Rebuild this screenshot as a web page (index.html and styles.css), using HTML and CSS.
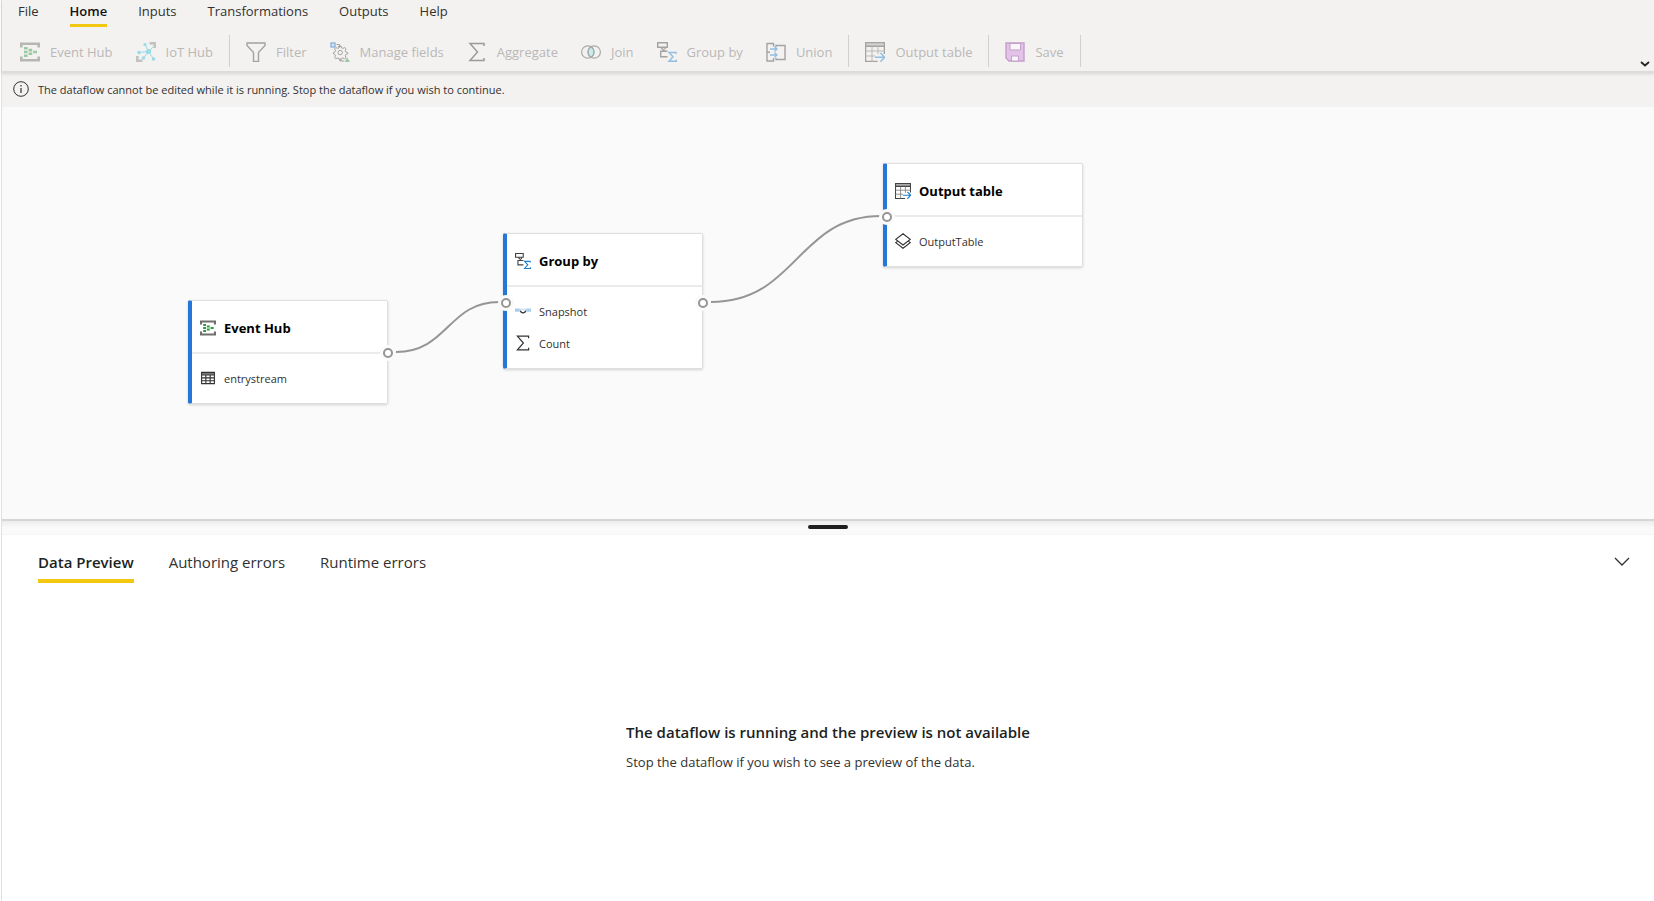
FILE: index.html
```html
<!DOCTYPE html>
<html lang="en">
<head>
<meta charset="UTF-8">
<meta name="viewport" content="width=device-width, initial-scale=1.0">
<title>Dataflow</title>
<link rel="stylesheet" href="styles.css">
</head>
<body>

<!-- shared icons, 20x20 -->
<svg class="sprite" aria-hidden="true">
<symbol id="i-eventhub" viewBox="0 0 20 20">
<path d="M0 0.5h20v5h-2.6v-2.4h-14.8v2.4h-2.6zM0 19.5h20v-5h-2.6v2.4h-14.8v-2.4h-2.6z" fill="#6e6e6e"/>
<path d="M4 5h3.6v2.6h-3.6zM4 8.7h3.6v2.6h-3.6zM4 12.4h3.6v2.6h-3.6zM8.6 6.8h3.6v2.6h-3.6zM8.6 10.5h3.6v2.6h-3.6zM13.2 8.7h3.8v2.6h-3.8z" fill="#2f9a41"/>
</symbol>
<symbol id="i-iothub" viewBox="0 0 20 20">
<path d="M13.5 0h6.5v6h-2.6v-3.4h-3.9zM0 14h2.6v3.4h3.9v2.6h-6.5z" fill="#8a8a8a"/>
<path d="M12.5 9.5L9 2.5M12.5 9.5L3 10.5M12.5 9.5L17.5 17M12.5 9.5L7.5 16M12.5 9.5L17 5" fill="none" stroke="#32bedd"/>
<g fill="#32bedd"><circle cx="12.5" cy="9.5" r="2.6"/><circle cx="9" cy="2.5" r="1.6"/><circle cx="3" cy="10.5" r="1.8"/><circle cx="17.5" cy="17" r="1.8"/><circle cx="7.5" cy="16" r="1.8"/></g>
</symbol>
<symbol id="i-filter" viewBox="0 0 20 20">
<path d="M1 1h18v2.5l-6.5 7v9h-5v-9L1 3.5z" fill="none" stroke="#444" stroke-width="1.4"/>
</symbol>
<symbol id="i-manage" viewBox="0 0 20 20">
<rect x="1" y="1" width="4" height="4" fill="#bcd6f2" stroke="#0f6cbd" stroke-width="1.4"/>
<path d="M6.5 2.5h3v2.5M8 4l1.5 1.5L11 4M10 16v3h4" fill="none" stroke="#444"/>
<path d="M9.1 4h2l.5 1.8 1.4.6 1.7-.9 1.4 1.4-.9 1.7.6 1.4 1.8.5v1.5l-1.8.5-.6 1.4.9 1.7-1.4 1.2-1.7-.9-1.4.6-.5 1.5h-1.6l-.5-1.5-1.4-.6-1.7.9-1.3-1.2.9-1.7-.6-1.4-1.3-.5v-1.5l1.3-.5.6-1.4-.9-1.7 1.3-1.4 1.7.9 1.4-.6z" fill="none" stroke="#444"/>
<circle cx="10.2" cy="10.6" r="2.2" fill="none" stroke="#444"/>
<path d="M14.5 20l2.6-4.5L20 20z" fill="#2f9a41"/>
</symbol>
<symbol id="i-sigma" viewBox="0 0 20 20">
<path d="M17 4V1.5H3l7.5 8.5L3 18.5h14V16" fill="none" stroke="#333" stroke-width="1.5"/>
</symbol>
<symbol id="i-join" viewBox="0 0 20 20">
<path d="M10 4.8a6 6 0 0 1 0 10.4a6 6 0 0 1 0-10.4z" fill="#9fe3e6" stroke="#038387" stroke-width="1.2"/>
<circle cx="6.8" cy="10" r="6.2" fill="none" stroke="#555" stroke-width="1.2"/>
<circle cx="13.2" cy="10" r="6.2" fill="none" stroke="#555" stroke-width="1.2"/>
</symbol>
<symbol id="i-group" viewBox="0 0 20 20">
<path d="M.7.7h9.6v4.6H.7zM4 5.5l4 4M10.5 9.3H3.7v5.5h6.8M8 5.5v2" fill="none" stroke="#444" stroke-width="1.4"/>
<path d="M19 12v-1.5h-7l4 4.3-4 4.5h7.3v-1.6" fill="none" stroke="#1b80d0" stroke-width="1.4"/>
</symbol>
<symbol id="i-union" viewBox="0 0 20 20">
<path d="M7.5 4.5V1.5H1v17.5h6.5v-3M1 10.2h3M10 5V3.5h9v14h-9V16" fill="none" stroke="#444" stroke-width="1.4"/>
<path d="M4 7h7M8.5 4.5L11 7 8.5 9.5M4 13h7M8.5 10.5L11 13l-2.5 2.5" fill="none" stroke="#1b80d0" stroke-width="1.3"/>
</symbol>
<symbol id="i-output" viewBox="0 0 20 20">
<path d="M.5.5h19v3.5H.5z" fill="#aaa"/>
<path d="M19.4 12V.6H.6v18.8h12M.6 4.2h18.8" fill="none" stroke="#444" stroke-width="1.4"/>
<path d="M.6 9h18.8M.6 14h9.4M7 4.2v15.2M13 4.2v8" fill="none" stroke="#777"/>
<path d="M10 15.3h9.5M15.5 11l4.2 4.3-4.2 4.3" fill="none" stroke="#1b80d0" stroke-width="1.5"/>
</symbol>
<symbol id="i-save" viewBox="0 0 20 20">
<path d="M1 1h18v18H4L1 16z" fill="#d08bdc" stroke="#8d3d9e" stroke-width="1.4"/>
<path d="M5 1.5h10.5V8H5zM6.500 19v-5h7v5z" fill="#fff" stroke="#8d3d9e"/>
</symbol>
<symbol id="i-table" viewBox="0 0 20 20">
<path d="M2 3h16v3H2z" fill="#777"/>
<path d="M2 3h16v14H2zM2 6.2h16M2 9.8h16M2 13.4h16M7.3 6v11M12.7 6v11" fill="none" stroke="#333" stroke-width="1.4"/>
</symbol>
<symbol id="i-snapshot" viewBox="0 0 20 20">
<path d="M0 7h6v4H0zM14 7h6v4h-6z" fill="#a9cdf0"/>
<path d="M6 7h8v2H6z" fill="#cfe3f6"/>
<path d="M6.8 9.500a3.300 3.300 0 0 0 6.500 0" fill="none" stroke="#333" stroke-width="1.500"/>
</symbol>
<symbol id="i-layers" viewBox="0 0 20 20">
<path d="M10 1l9 7-9 7-9-7zM3 10.500L1 12l9 7 9-7-2-1.500" fill="none" stroke="#333" stroke-width="1.400"/>
</symbol>
</svg>

<div class="app">
<header class="ribbon">
<nav class="menu">
<button>File</button>
<button class="active">Home</button>
<button>Inputs</button>
<button>Transformations</button>
<button>Outputs</button>
<button>Help</button>
</nav>
<div class="toolbar">
<div class="group">
<button disabled><svg><use href="#i-eventhub"/></svg>Event Hub</button>
<button disabled><svg><use href="#i-iothub"/></svg>IoT Hub</button>
</div>
<div class="group">
<button disabled><svg><use href="#i-filter"/></svg>Filter</button>
<button disabled><svg><use href="#i-manage"/></svg>Manage fields</button>
<button disabled><svg><use href="#i-sigma"/></svg>Aggregate</button>
<button disabled><svg><use href="#i-join"/></svg>Join</button>
<button disabled><svg><use href="#i-group"/></svg>Group by</button>
<button disabled><svg><use href="#i-union"/></svg>Union</button>
</div>
<div class="group">
<button disabled><svg><use href="#i-output"/></svg>Output table</button>
</div>
<div class="group">
<button disabled><svg><use href="#i-save"/></svg>Save</button>
</div>
<button class="collapse" aria-label="Collapse ribbon"><svg viewBox="0 0 10 6"><path d="M1 1l4 3.500L9 1" fill="none" stroke="#222" stroke-width="1.800"/></svg></button>
</div>
</header>

<div class="notice">
<svg viewBox="0 0 16 16"><circle cx="8" cy="8" r="7.300" fill="none" stroke="#323130"/><path d="M8 7v5M8 4v1.500" stroke="#323130" stroke-width="1.200"/></svg>
<span>The dataflow cannot be edited while it is running. Stop the dataflow if you wish to continue.</span>
</div>

<main class="canvas">
<div class="node node-eventhub">
<h2><svg><use href="#i-eventhub"/></svg>Event Hub</h2>
<ul>
<li><svg><use href="#i-table"/></svg>entrystream</li>
</ul>
</div>
<div class="node node-group">
<h2><svg><use href="#i-group"/></svg>Group by</h2>
<ul>
<li><svg><use href="#i-snapshot"/></svg>Snapshot</li>
<li><svg><use href="#i-sigma"/></svg>Count</li>
</ul>
</div>
<div class="node node-output">
<h2><svg><use href="#i-output"/></svg>Output table</h2>
<ul>
<li><svg><use href="#i-layers"/></svg>OutputTable</li>
</ul>
</div>
<svg class="edges" aria-hidden="true">
<path d="M394 245C446 245 446 195 497 195"/>
<path d="M709 195C795 195 795 109 879 109"/>
<g class="ports">
<circle class="halo" cx="386" cy="246" r="8"/><circle cx="386" cy="246" r="4"/>
<circle class="halo" cx="504" cy="196" r="8"/><circle cx="504" cy="196" r="4"/>
<circle class="halo" cx="701" cy="196" r="8"/><circle cx="701" cy="196" r="4"/>
<circle class="halo" cx="885" cy="110" r="8"/><circle cx="885" cy="110" r="4"/>
</g>
</svg>
</main>

<div class="splitter"><span class="grip"></span></div>

<section class="preview">
<div class="tabs">
<button class="active">Data Preview</button>
<button>Authoring errors</button>
<button>Runtime errors</button>
<button class="hide" aria-label="Hide panel"><svg viewBox="0 0 16 10"><path d="M1 1l7 7 7-7" fill="none" stroke="#323130" stroke-width="1.300"/></svg></button>
</div>
<div class="empty">
<div>
<h3>The dataflow is running and the preview is not available</h3>
<p>Stop the dataflow if you wish to see a preview of the data.</p>
</div>
</div>
</section>
</div>

</body>
</html>
```

FILE: styles.css
```css
* {
box-sizing: border-box;
}
body {
margin: 0;
font-family: "Segoe UI", "Open Sans", "Noto Sans", sans-serif;
font-size: 13px;
color: #323130;
background: #fff;
}
button {
font: inherit;
color: inherit;
background: none;
border: none;
padding: 0;
white-space: nowrap;
}
h2, h3, p, ul {
margin: 0;
padding: 0;
}
.sprite {
display: none;
}
.app {
display: flex;
flex-direction: column;
min-height: 100vh;
margin-left: 1px;
border-left: 1px solid #e1e1e1;
}

/* ribbon */
.ribbon {
position: relative;
background: #f3f2f1;
border-bottom: 2px solid #dddcda;
box-shadow: 0 1px 3px rgba(0, 0, 0, 0.12);
}
.menu {
display: flex;
gap: 31px;
padding-left: 16px;
}
.menu button {
height: 27px;
line-height: 20px;
padding-bottom: 2px;
border-bottom: 3px solid transparent;
}
.menu .active {
font-weight: 600;
color: #111;
border-color: #f2c811;
}
.toolbar {
display: flex;
align-items: flex-end;
height: 44px;
}
.group {
display: flex;
align-items: center;
gap: 23px;
height: 32px;
margin-bottom: 4px;
padding: 0 16px;
border-right: 1px solid #d2d0ce;
}
.group:first-child {
padding-left: 18px;
}
.group button {
display: flex;
align-items: center;
gap: 10px;
padding-top: 2px;
color: #bab8b6;
}
.group svg {
width: 20px;
height: 20px;
opacity: 0.45;
}
.collapse {
margin-left: auto;
padding: 0 4px 4px;
line-height: 0;
}
.collapse svg {
width: 10px;
height: 6px;
}

.notice {
display: flex;
align-items: center;
gap: 9px;
height: 34px;
padding: 0 11px 2px;
background: #f3f2f1;
font-size: 11px;
}
.notice svg {
width: 16px;
height: 16px;
}

/* diagram */
.canvas {
position: relative;
height: 412px;
background: #fafafa;
overflow: hidden;
}
.node {
position: absolute;
width: 200px;
background: #fff;
border: 1px solid #e1dfdd;
border-left: 4px solid #2476d8;
border-radius: 2px;
box-shadow: 0 1px 3px rgba(0, 0, 0, 0.16);
}
.node-eventhub {
left: 186px;
top: 193px;
}
.node-group {
left: 501px;
top: 126px;
}
.node-output {
left: 881px;
top: 56px;
}
.node h2 {
display: flex;
align-items: center;
gap: 8px;
height: 53px;
padding: 3px 8px 0;
border-bottom: 2px solid #edebe9;
font-size: 13px;
font-weight: 700;
color: #000;
}
.node ul {
padding: 8px 8px 9px;
list-style: none;
font-size: 11px;
}
.node li {
display: flex;
align-items: center;
gap: 8px;
height: 32px;
}
.node svg {
width: 16px;
height: 16px;
}
.edges {
position: absolute;
left: 0;
top: 0;
width: 100%;
height: 100%;
fill: none;
stroke: #979593;
stroke-width: 2;
}
.ports {
fill: #fff;
}
.ports .halo {
fill: #fafafa;
stroke: none;
}

.splitter {
display: flex;
justify-content: center;
height: 16px;
padding-top: 4px;
border-top: 2px solid #d6d6d6;
border-bottom: 1px solid #f5f5f5;
background: linear-gradient(#ececec, #fafafa 50%);
}
.grip {
width: 40px;
height: 4px;
border-radius: 2px;
background: #1f1f1f;
}

/* bottom panel */
.preview {
display: flex;
flex: 1;
flex-direction: column;
}
.tabs {
display: flex;
gap: 35px;
padding: 12px 24px 0 36px;
font-size: 15px;
}
.tabs button {
height: 36px;
line-height: 30px;
padding-bottom: 2px;
border-bottom: 4px solid transparent;
}
.tabs .active {
font-weight: 600;
color: #201f1e;
border-color: #f2c811;
}
.tabs .hide {
margin-left: auto;
}
.hide svg {
display: block;
width: 16px;
height: 10px;
}
.empty {
display: flex;
flex: 1;
align-items: center;
justify-content: center;
padding-top: 10px;
}
.empty h3 {
margin-bottom: 8px;
font-size: 15px;
line-height: 22px;
font-weight: 600;
color: #201f1e;
}
.empty p {
line-height: 22px;
}
```
